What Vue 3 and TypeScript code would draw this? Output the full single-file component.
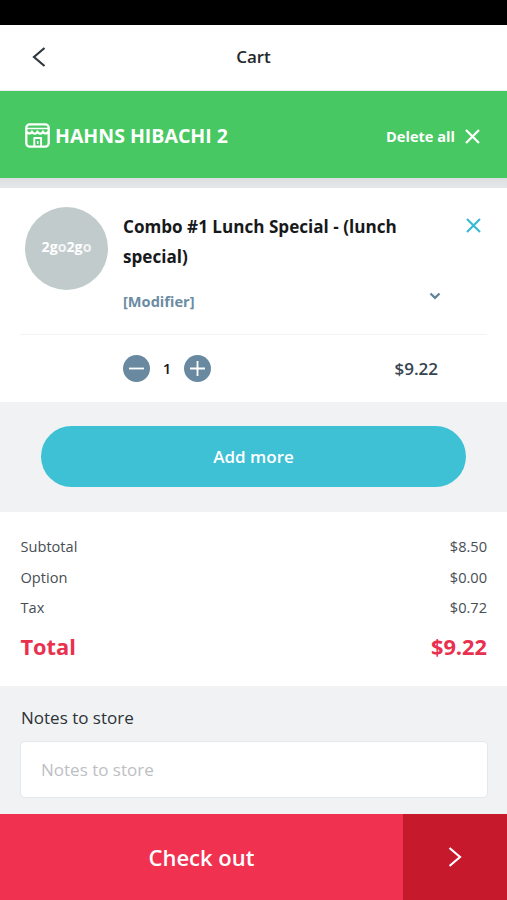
<script setup lang="ts">
import { ref, computed } from 'vue'

const quantity = ref<number>(1)
const unitTotal = 9.22
const notes = ref<string>('')
const linePrice = computed<string>(() => `$${(unitTotal * quantity.value).toFixed(2)}`)

const summary: { label: string; value: string }[] = [
  { label: 'Subtotal', value: '$8.50' },
  { label: 'Option', value: '$0.00' },
  { label: 'Tax', value: '$0.72' },
]
</script>

<template>
  <div class="screen">
    <div class="status"></div>
    <header class="nav">
      <button class="back">
        <svg width="14" height="20" viewBox="0 0 14 20"><path d="M12.500 1 2 10l10.500 9" /></svg>
      </button>
      <h1>Cart</h1>
    </header>

    <section class="store">
      <svg class="shop" width="25" height="25" viewBox="0 0 25 25">
        <rect x="1.300" y="1.300" width="22.400" height="22.400" rx="3.500" />
        <path class="thin" d="M2 5.500h21" />
        <path d="M2 8.500c.5 2.600 4.300 2.600 5 0 .9 2.800 4.600 2.800 5.500 0 .9 2.800 4.600 2.800 5.500 0 .7 2.600 4.500 2.600 5 0" />
        <path class="door" d="M9.300 23.500v-8.500h6.800v8.500" />
        <path class="thin" d="M12.700 18v3" />
      </svg>
      <h2>HAHNS HIBACHI 2</h2>
      <button class="delete">
        <span>Delete all</span>
        <svg width="15" height="15" viewBox="0 0 15 15"><path d="m1 1 13 13M14 1 1 14" /></svg>
      </button>
    </section>
    <div class="strip"></div>

    <section class="item">
      <div class="details">
        <div class="avatar"><span>2g<i>o</i>2g<i>o</i></span></div>
        <div class="info">
          <h3>Combo #1 Lunch Special - (lunch special)</h3>
          <div class="modifier">
            <span>[Modifier]</span>
            <svg width="12" height="8" viewBox="0 0 12 8"><path d="m1.500 1.500 4.500 4.300 4.500-4.300" /></svg>
          </div>
        </div>
        <button class="remove">
          <svg width="15" height="15" viewBox="0 0 15 15"><path d="m1 1 13 13M14 1 1 14" /></svg>
        </button>
      </div>
      <div class="amount">
        <button class="round" @click="quantity = Math.max(1, quantity - 1)">
          <svg width="27" height="27" viewBox="0 0 27 27"><path d="M6 13.500h15" /></svg>
        </button>
        <span class="qty">{{ quantity }}</span>
        <button class="round" @click="quantity++">
          <svg width="27" height="27" viewBox="0 0 27 27"><path d="M6 13.500h15M13.500 6v15" /></svg>
        </button>
        <span class="price">{{ linePrice }}</span>
      </div>
    </section>

    <section class="more"><button>Add more</button></section>

    <section class="summary">
      <div v-for="row in summary" :key="row.label" class="row">
        <span>{{ row.label }}</span><span>{{ row.value }}</span>
      </div>
      <div class="total"><span>Total</span><span>{{ linePrice }}</span></div>
    </section>

    <section class="notes">
      <label for="notes">Notes to store</label>
      <input id="notes" v-model="notes" type="text" placeholder="Notes to store" />
    </section>

    <footer class="checkout">
      <button class="go">Check out</button>
      <button class="arrow">
        <svg width="14" height="20" viewBox="0 0 14 20"><path d="m1.500 1 10.500 9-10.500 9" /></svg>
      </button>
    </footer>
  </div>
</template>

<style>
body {
  margin: 0;
}
</style>

<style scoped>
.screen {
  box-sizing: border-box;
  width: 507px;
  height: 900px;
  display: flex;
  flex-direction: column;
  overflow: hidden;
  background: #fff;
  font-family: "Open Sans", "Noto Sans", sans-serif;
  color: #17191b;
}
.screen * {
  box-sizing: border-box;
}
button {
  padding: 0;
  border: 0;
  background: none;
  font: inherit;
  color: inherit;
}
h1, h2, h3 {
  margin: 0;
}
svg {
  display: block;
  fill: none;
  stroke: currentColor;
}
.status {
  height: 25px;
  background: #000;
}
.nav {
  height: 66px;
  padding-bottom: 1px;
  display: grid;
  grid-template-columns: 100px 1fr 100px;
  align-items: center;
  border-bottom: 1px solid #ebeef0;
}
.back {
  padding-left: 32px;
  color: #30373e;
}
.back svg {
  stroke-width: 2.200;
}
.nav h1 {
  padding-bottom: 2px;
  text-align: center;
  color: #25282b;
  font-size: 17px;
  font-weight: 600;
}
.store {
  height: 87px;
  padding: 2px 27px 0 25px;
  display: flex;
  align-items: center;
  background: #47c862;
  color: #fff;
}
.shop {
  stroke-width: 2.300;
  stroke-linejoin: round;
}
.shop .thin {
  stroke-width: 1.500;
}
.shop .door {
  stroke-width: 1.900;
}
.store h2 {
  margin-left: 5px;
  font-size: 19.500px;
  font-weight: 700;
  line-height: 26px;
}
.delete {
  margin-left: auto;
  display: flex;
  align-items: center;
  gap: 10px;
  font-size: 14.600px;
  font-weight: 700;
}
.delete svg {
  margin-top: 2px;
  stroke-width: 2.300;
}
.strip {
  height: 10px;
  background: linear-gradient(#dcdee1, #e5e7e9);
}
.item {
  height: 214px;
  padding: 0 20px;
}
.details {
  height: 147px;
  padding: 19px 6px 0 5px;
  display: flex;
  align-items: flex-start;
  border-bottom: 1px solid #f1f3f4;
}
.avatar {
  width: 83px;
  height: 83px;
  padding-bottom: 3px;
  border-radius: 50%;
  display: flex;
  align-items: center;
  justify-content: center;
  background: #c1cbcc;
  color: #fff;
  font-size: 14.200px;
  font-weight: 700;
  line-height: 18px;
}
.avatar i {
  font-style: normal;
  opacity: .8;
}
.info {
  width: 317px;
  margin-left: 15px;
}
.info h3 {
  width: 300px;
  padding-top: 5px;
  font-size: 17.100px;
  font-weight: 700;
  line-height: 29.500px;
}
.modifier {
  margin-top: 19px;
  display: flex;
  justify-content: space-between;
  align-items: flex-start;
  color: #6b8ca3;
  font-size: 14.600px;
  font-weight: 700;
  line-height: 23px;
}
.modifier svg {
  margin: 2px -1px 0 0;
  stroke: #64849a;
  stroke-width: 2.400;
}
.remove {
  margin: 11px 0 0 auto;
  color: #3cb9d4;
}
.remove svg {
  stroke-width: 2.200;
}
.amount {
  height: 67px;
  padding: 0 49px 0 103px;
  display: flex;
  align-items: center;
}
.round {
  width: 27px;
  height: 27px;
  border-radius: 50%;
  background: #68899f;
  color: #fff;
}
.round svg {
  stroke-width: 1.800;
}
.qty {
  width: 34px;
  padding-bottom: 2px;
  text-align: center;
  font-size: 15px;
  font-weight: 600;
}
.price {
  margin-left: auto;
  color: #36444f;
  font-size: 17px;
  font-weight: 600;
}
.more {
  height: 110px;
  padding: 24px 41px 25px;
  display: flex;
  background: #f0f2f4;
}
.more button {
  flex: 1;
  border-radius: 31px;
  background: #3ec0d5;
  color: #fff;
  font-size: 17px;
  font-weight: 600;
}
.summary {
  height: 174px;
  padding: 19px 20px 0 20.500px;
}
.row, .total {
  display: flex;
  justify-content: space-between;
}
.row {
  color: #484e53;
  font-size: 14.600px;
  line-height: 30.500px;
}
.total {
  margin-top: 7px;
  color: #e9304f;
  font-size: 21.800px;
  font-weight: 700;
  line-height: 34px;
}
.notes {
  height: 128px;
  padding: 20px 19px 0 20px;
  display: flex;
  flex-direction: column;
  background: #f0f2f4;
}
.notes label {
  padding-left: 1px;
  color: #2e3337;
  font-size: 17px;
  line-height: 24px;
}
.notes input {
  height: 57px;
  margin-top: 11px;
  padding: 0 20px 1px;
  border: 1px solid #e5e8ea;
  border-radius: 5px;
  background: #fff;
  font: 17px "Open Sans", sans-serif;
  outline: none;
}
.notes input::placeholder {
  color: #bdc0c3;
}
.checkout {
  height: 86px;
  display: grid;
  grid-template-columns: 403px 104px;
  color: #fff;
}
.go {
  background: #f0314f;
  font-size: 22px;
  font-weight: 600;
}
.arrow {
  display: flex;
  align-items: center;
  justify-content: center;
  background: #c6192b;
}
.arrow svg {
  stroke-width: 2.200;
}
</style>
